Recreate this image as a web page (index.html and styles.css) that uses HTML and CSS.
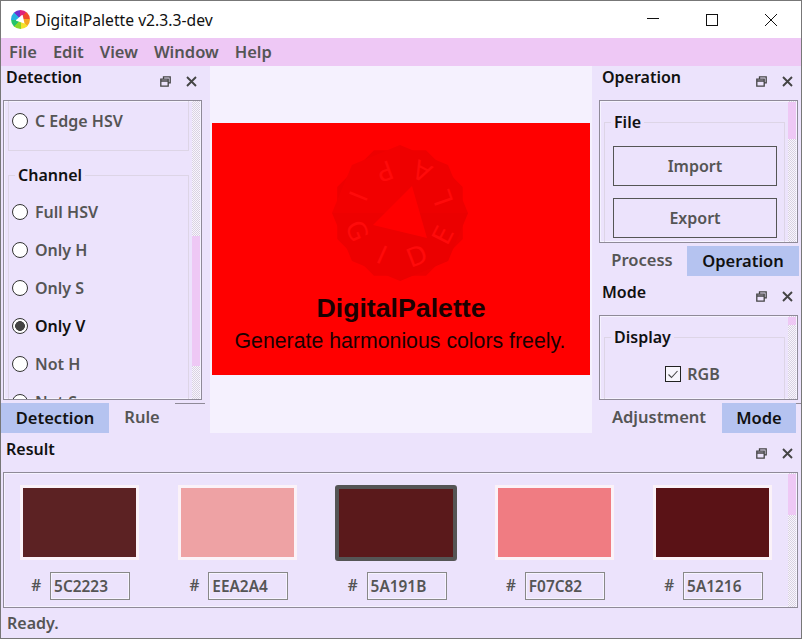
FILE: index.html
```html
<!DOCTYPE html>
<html lang="en">
<head>
<meta charset="utf-8">
<title>DigitalPalette</title>
<link rel="stylesheet" href="styles.css">
</head>
<body>
<svg class="defs" width="0" height="0" aria-hidden="true">
  <symbol id="i-float" viewBox="0 0 11 11"><path d="M3.5 2.5V.8h6.7v6h-2M.8 3.2h7.4v7H.8zM.8 5h7.4" fill="none" stroke="#444" stroke-width="1.3"/></symbol>
  <symbol id="i-close" viewBox="0 0 11 11"><path d="M1 1l9 9M10 1l-9 9" fill="none" stroke="#444" stroke-width="1.9"/></symbol>
</svg>
<div class="window">
  <header class="titlebar">
    <div class="logo"><span class="logo-tri"></span></div>
    <span class="title">DigitalPalette v2.3.3-dev</span>
    <div class="winbtns">
      <svg class="winbtn" width="14" height="14" viewBox="0 0 14 14"><path d="M1 5.5h12" stroke="#111" fill="none"/></svg>
      <svg class="winbtn" width="14" height="14" viewBox="0 0 14 14"><rect x="1.5" y="1.5" width="11" height="11" stroke="#111" fill="none"/></svg>
      <svg class="winbtn" width="14" height="14" viewBox="0 0 14 14"><path d="M1 1l12 12M13 1L1 13" stroke="#111" fill="none"/></svg>
    </div>
  </header>
  <nav class="menubar">
    <span>File</span><span>Edit</span><span>View</span><span>Window</span><span>Help</span>
  </nav>
  <div class="main">
    <section class="col col-left">
      <div class="dock-head dock-head-first">
        <span class="dock-title">Detection</span>
        <svg class="dock-icon"><use href="#i-float"/></svg>
        <svg class="dock-icon"><use href="#i-close"/></svg>
      </div>
      <div class="scroll scroll-left">
        <div class="scroll-content">
          <div class="group-cut">
            <label class="radio-row"><span class="radio"></span>C Edge HSV</label>
          </div>
          <fieldset class="group group-channel">
            <legend>Channel</legend>
            <label class="radio-row"><span class="radio"></span>Full HSV</label>
            <label class="radio-row"><span class="radio"></span>Only H</label>
            <label class="radio-row"><span class="radio"></span>Only S</label>
            <label class="radio-row is-on"><span class="radio"></span>Only V</label>
            <label class="radio-row"><span class="radio"></span>Not H</label>
            <label class="radio-row"><span class="radio"></span>Not S</label>
          </fieldset>
        </div>
        <div class="sbar"><div class="thumb thumb-left"></div></div>
      </div>
      <div class="tabs">
        <span class="tab tab-on tab-detection">Detection</span>
        <span class="tab tab-rule">Rule</span>
        <span class="tab-line tab-line-left"></span>
      </div>
    </section>

    <section class="center">
      <div class="banner">
        <svg class="mark" width="140" height="140" viewBox="-70 -70 140 140" aria-hidden="true">
          <path d="M68 0L48 48 0 68-48 48-68 0-48-48 0-68 48-48z" fill="#ee0000"/>
          <path d="M68 0L48 48 0 68-48 48-68 0-48-48 0-68 48-48z" fill="#ee0000" transform="rotate(22.5)"/>
          <path d="M0 0L0-68-48-48-68 0z" fill="#f00" opacity=".28"/>
          <path d="M0 0L0 68 48 48 68 0z" fill="#e80000" opacity=".5"/>
          <path d="M12-27L-27 12 27 25z" fill="#f00"/>
          <g class="mark-letters">
            <text transform="translate(-43 18) rotate(67)">G</text>
            <text transform="translate(-18 42) rotate(24)">I</text>
            <text transform="translate(17 43) rotate(-21)">D</text>
            <text transform="translate(43 22) rotate(-63)">E</text>
            <text transform="translate(43 -15) rotate(-109)">L</text>
            <text transform="translate(22 -42) rotate(-153)">A</text>
            <text transform="translate(-15 -42) rotate(160)">P</text>
            <text transform="translate(-42 -17) rotate(112)">I</text>
          </g>
        </svg>
        <h1 class="banner-name">DigitalPalette</h1>
        <p class="banner-sub">Generate harmonious colors freely.</p>
      </div>
    </section>

    <section class="col col-right">
      <div class="dock-head dock-head-first">
        <span class="dock-title">Operation</span>
        <svg class="dock-icon"><use href="#i-float"/></svg>
        <svg class="dock-icon"><use href="#i-close"/></svg>
      </div>
      <div class="scroll scroll-op">
        <div class="scroll-content">
          <fieldset class="group group-file">
            <legend>File</legend>
            <button class="btn" type="button">Import</button>
            <button class="btn" type="button">Export</button>
          </fieldset>
        </div>
        <div class="sbar"><div class="thumb thumb-op"></div></div>
      </div>
      <div class="tabs tabs-op">
        <span class="tab tab-process">Process</span>
        <span class="tab tab-on tab-operation">Operation</span>
      </div>
      <div class="dock-head">
        <span class="dock-title">Mode</span>
        <svg class="dock-icon"><use href="#i-float"/></svg>
        <svg class="dock-icon"><use href="#i-close"/></svg>
      </div>
      <div class="scroll scroll-mode">
        <div class="scroll-content">
          <fieldset class="group group-display">
            <legend>Display</legend>
            <label class="check-row">
              <svg class="check" width="16" height="16" viewBox="0 0 16 16"><rect x=".5" y=".5" width="15" height="15" fill="#f7f5fc" stroke="#222"/><path d="M3.5 8.5l3 3 6-6.5" fill="none" stroke="#444" stroke-width="1.1"/></svg>
              RGB
            </label>
          </fieldset>
        </div>
        <div class="sbar"><div class="thumb thumb-mode"></div></div>
      </div>
      <div class="tabs">
        <span class="tab tab-adjust">Adjustment</span>
        <span class="tab tab-on tab-mode">Mode</span>
        <span class="tab-line"></span>
      </div>
    </section>
  </div>

  <section class="result">
    <div class="dock-head dock-head-result">
      <span class="dock-title">Result</span>
      <svg class="dock-icon"><use href="#i-float"/></svg>
      <svg class="dock-icon"><use href="#i-close"/></svg>
    </div>
    <div class="scroll scroll-result">
      <div class="scroll-content swatches">
        <div class="item"><div class="swatch c1"></div><div class="hex"><span>#</span><span class="hex-input">5C2223</span></div></div>
        <div class="item"><div class="swatch c2"></div><div class="hex"><span>#</span><span class="hex-input">EEA2A4</span></div></div>
        <div class="item item-on"><div class="swatch c3"></div><div class="hex"><span>#</span><span class="hex-input">5A191B</span></div></div>
        <div class="item"><div class="swatch c4"></div><div class="hex"><span>#</span><span class="hex-input">F07C82</span></div></div>
        <div class="item"><div class="swatch c5"></div><div class="hex"><span>#</span><span class="hex-input">5A1216</span></div></div>
      </div>
      <div class="sbar"><div class="thumb thumb-result"></div></div>
    </div>
  </section>
  <footer class="status">Ready.</footer>
</div>
</body>
</html>
```

FILE: styles.css
```css
* { box-sizing: border-box; }
html, body { margin: 0; padding: 0; }
body {
  width: 802px;
  height: 639px;
  overflow: hidden;
  font-family: "Noto Sans", sans-serif;
  font-weight: 600;
  font-size: 16px;
  line-height: 22px;
  color: #555;
  background: #ece3fc;
}
.defs { position: absolute; }
.window {
  width: 802px;
  height: 639px;
  border: 1px solid #777;
  display: flex;
  flex-direction: column;
  background: #ece3fc;
}

/* title bar */
.titlebar {
  height: 37px;
  flex: none;
  background: #fff;
  display: flex;
  align-items: center;
  padding-left: 10px;
  color: #111;
}
.logo {
  width: 19px;
  height: 19px;
  border-radius: 50%;
  background: conic-gradient(#e0247a 0 10%, #f04a2a 10% 25%, #f5a623 25% 37%, #f5e02a 37% 50%, #8bd62a 50% 62%, #25c46a 62% 75%, #25b0e0 75% 88%, #6a30d0 88% 100%);
  display: flex;
  align-items: center;
  justify-content: center;
}
.logo-tri {
  width: 10px;
  height: 10px;
  background: #fff;
  clip-path: polygon(70% 0, 0 60%, 90% 90%);
}
.title {
  margin-left: 5px;
  font-size: 15.7px;
  font-weight: 400;
}
.winbtns { margin-left: auto; display: flex; margin-right: 23px; gap: 45px; }
.winbtn { display: block; }

/* menu */
.menubar {
  height: 28px;
  flex: none;
  background: #eec8f5;
  display: flex;
  align-items: center;
  gap: 16px;
  padding-left: 8px;
  font-size: 16.5px;
}

/* main */
.main { height: 367px; flex: none; display: flex; }
.col { width: 209px; flex: none; display: flex; flex-direction: column; }
.center {
  width: 382px;
  flex: none;
  background: #f5f1fe;
  display: flex;
  align-items: center;
  justify-content: center;
  padding-bottom: 1px;
}

/* dock headers */
.dock-head {
  display: flex;
  align-items: flex-start;
  height: 39px;
  flex: none;
  padding-top: 5px;
  color: #111;
}
.dock-head-first { height: 34px; padding-top: 0; }
.dock-head-result { padding-left: 5px; }
.col-left .dock-head { padding-left: 5px; }
.col-right .dock-head { padding-left: 10px; }
.dock-title { flex: 1; }
.dock-icon { width: 11px; height: 11px; margin-top: 10px; flex: none; margin-right: 15px; }
.dock-head .dock-icon:last-child { margin-right: 8px; }
.col-left .dock-head .dock-icon:last-child { margin-right: 13px; }

/* scroll areas */
.scroll {
  display: flex;
  overflow: hidden;
  border: 1px solid #8f8a98;
  box-shadow: inset 0 0 0 1px #f6f3ff;
}
.scroll-content { flex: 1; min-width: 0; overflow: hidden; }
.sbar {
  width: 8px;
  flex: none;
  margin-right: 1px;
  background: repeating-conic-gradient(#d9d2e2 0 25%, #f8f5fd 0 50%) 0 0 / 2px 2px;
}
.thumb { background: #eec8f5; }
.scroll-left { width: 199px; height: 300px; margin-left: 2px; }
.scroll-left .scroll-content { padding: 0 3px 0 4px; }
.thumb-left { margin-top: 135px; height: 130px; }
.scroll-op { width: 199px; height: 143px; margin-left: 7px; }
.scroll-op .scroll-content { padding: 10px 3px 0 4px; }
.thumb-op { margin-top: 1px; height: 37px; }
.scroll-mode { width: 199px; height: 85px; margin-left: 7px; }
.scroll-mode .scroll-content { padding: 10px 3px 0 4px; }
.thumb-mode { margin-top: 1px; height: 8px; }
.scroll-result { width: 795px; height: 136px; margin-left: 2px; flex: none; }
.thumb-result { margin-top: 1px; height: 41px; }

/* groups */
.group {
  margin: 0;
  padding: 0;
  min-width: 0;
  border: 1px solid #ddd5e6;
}
.group legend { padding: 0 3px; margin-left: 6px; color: #111; line-height: 22px; }
.group-cut {
  border: 1px solid #ddd5e6;
  border-top: 0;
  height: 50px;
  padding-top: 1px;
}
.group-channel { margin-top: 13px; padding-top: 7px; }
.radio-row { display: flex; align-items: center; height: 38px; padding-left: 3px; gap: 7px; }
.radio {
  width: 16px;
  height: 16px;
  border-radius: 50%;
  border: 1px solid #333;
  background: #fff;
  flex: none;
}
.is-on { color: #111; }
.is-on .radio { background: radial-gradient(circle, #444 0 4.6px, #fff 5.2px); }

.group-file { padding: 13px 8px 0; }
.group-file legend { margin-left: -2px; }
.btn {
  display: block;
  width: 164px;
  height: 40px;
  margin: 0 0 12px;
  padding: 0;
  background: transparent;
  border: 1px solid #555;
  font: inherit;
  color: #555;
}
.group-display { padding-top: 14px; height: 90px; }
.check-row { display: flex; align-items: center; justify-content: center; gap: 6px; height: 24px; padding-right: 4px; }
.check { flex: none; }

/* tabs */
.tabs { display: flex; height: 30px; margin-top: 3px; flex: none; font-size: 16.5px; }
.tabs-op { padding-left: 5px; }
.tab { display: flex; align-items: center; justify-content: center; height: 30px; padding-bottom: 2px; }
.tab-on { background: #b5c3f0; color: #111; padding-bottom: 1px; }
.tab-detection { width: 108px; }
.tab-rule { width: 66px; }
.tab-line { flex: 1; border-top: 1px solid #8f8a98; }
.tab-line-left { margin-right: 5px; flex: 1; }
.tab-process { width: 90px; }
.tab-operation { width: 112px; }
.tab-adjust { width: 125px; margin-left: 5px; padding-right: 1px; }
.tab-mode { width: 74px; }

/* banner */
.banner {
  position: relative;
  width: 378px;
  height: 252px;
  background: #f00;
  display: flex;
  flex-direction: column;
  align-items: center;
  justify-content: flex-end;
  padding-bottom: 22px;
  color: #1a0000;
  font-family: "Liberation Sans", Arial, sans-serif;
}
.mark { position: absolute; left: 118px; top: 20px; }
.mark-letters text {
  font-family: "DejaVu Sans", sans-serif;
  font-size: 26px;
  font-weight: 400;
  fill: #ff0a0a;
  text-anchor: middle;
  dominant-baseline: central;
}
.banner-name { position: relative; margin: 0 0 6px; font-size: 26.7px; line-height: 30px; font-weight: 700; }
.banner-sub { position: relative; margin: 0 2px 0 0; font-size: 21.3px; line-height: 24px; font-weight: 400; }

/* result */
.result { flex: none; }
.swatches {
  display: grid;
  grid-template-columns: repeat(5, 158.25px);
  margin-left: -3.5px;
}
.item { display: flex; flex-direction: column; align-items: center; padding-top: 12px; }
.swatch {
  width: 119px;
  height: 75px;
  border: 3px solid #fbf2f8;
  flex: none;
}
.c1 { background: #5c2223; }
.c2 { background: #eea2a4; }
.c3 { background: #5a191b; }
.c4 { background: #f07c82; }
.c5 { background: #5a1216; }
.item-on .swatch { width: 122px; height: 76px; border: 4px solid #555; border-radius: 3px; }
.hex { display: flex; align-items: center; gap: 9px; margin-top: 12px; padding-left: 2px; color: #555; font-size: 15.4px; }
.hex-input {
  width: 80px;
  height: 28px;
  border: 1px solid #888;
  box-shadow: inset 0 0 0 1px #f6f3ff;
  padding-left: 3px;
  line-height: 27px;
}
.item-on .hex { margin-top: 11px; }

/* status */
.status { height: 29px; flex: none; padding: 4px 0 0 6px; }
```
